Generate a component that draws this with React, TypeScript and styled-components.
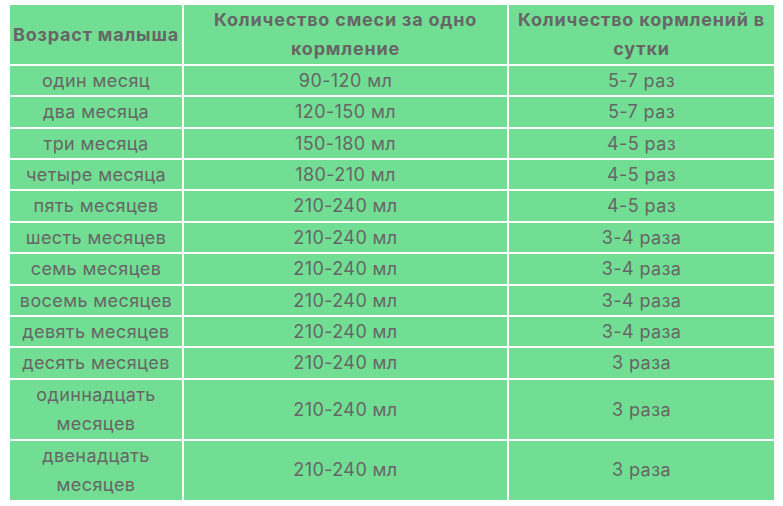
import * as React from 'react'
import styled, { createGlobalStyle } from 'styled-components'

const GlobalStyle = createGlobalStyle`
  html, body {
    margin: 0;
    padding: 0;
    background: #ffffff;
  }
`

const Page = styled.div`
  padding: 3px 0 0 8px;
`

const Table = styled.table`
  border-collapse: separate;
  border-spacing: 2px;
  table-layout: fixed;
  font-family: Inter, "Liberation Sans", Arial, sans-serif;
  font-size: 18px;
  color: #666666;
`

const HeadCell = styled.th<{ $width: number }>`
  width: ${(p) => p.$width}px;
  background: #72de93;
  padding: 0;
  font-weight: 700;
  letter-spacing: 0.8px;
  line-height: 29.4px;
  text-align: center;
  vertical-align: middle;
`

const Cell = styled.td`
  background: #72de93;
  padding: 0 8px;
  letter-spacing: 0.4px;
  line-height: 29.4px;
  text-align: center;
  vertical-align: middle;
`

const rows: [string, string, string][] = [
  ['один месяц', '90-120 мл', '5-7 раз'],
  ['два месяца', '120-150 мл', '5-7 раз'],
  ['три месяца', '150-180 мл', '4-5 раз'],
  ['четыре месяца', '180-210 мл', '4-5 раз'],
  ['пять месяцев', '210-240 мл', '4-5 раз'],
  ['шесть месяцев', '210-240 мл', '3-4 раза'],
  ['семь месяцев', '210-240 мл', '3-4 раза'],
  ['восемь месяцев', '210-240 мл', '3-4 раза'],
  ['девять месяцев', '210-240 мл', '3-4 раза'],
  ['десять месяцев', '210-240 мл', '3 раза'],
  ['одиннадцать месяцев', '210-240 мл', '3 раза'],
  ['двенадцать месяцев', '210-240 мл', '3 раза'],
]

export default function App() {
  return (
    <Page>
      <GlobalStyle />
      <Table>
        <thead>
          <tr>
            <HeadCell $width={172}>Возраст малыша</HeadCell>
            <HeadCell $width={323}>Количество смеси за одно кормление</HeadCell>
            <HeadCell $width={265}>Количество кормлений в сутки</HeadCell>
          </tr>
        </thead>
        <tbody>
          {rows.map((r) => (
            <tr key={r[0]}>
              <Cell>{r[0]}</Cell>
              <Cell>{r[1]}</Cell>
              <Cell>{r[2]}</Cell>
            </tr>
          ))}
        </tbody>
      </Table>
    </Page>
  )
}
